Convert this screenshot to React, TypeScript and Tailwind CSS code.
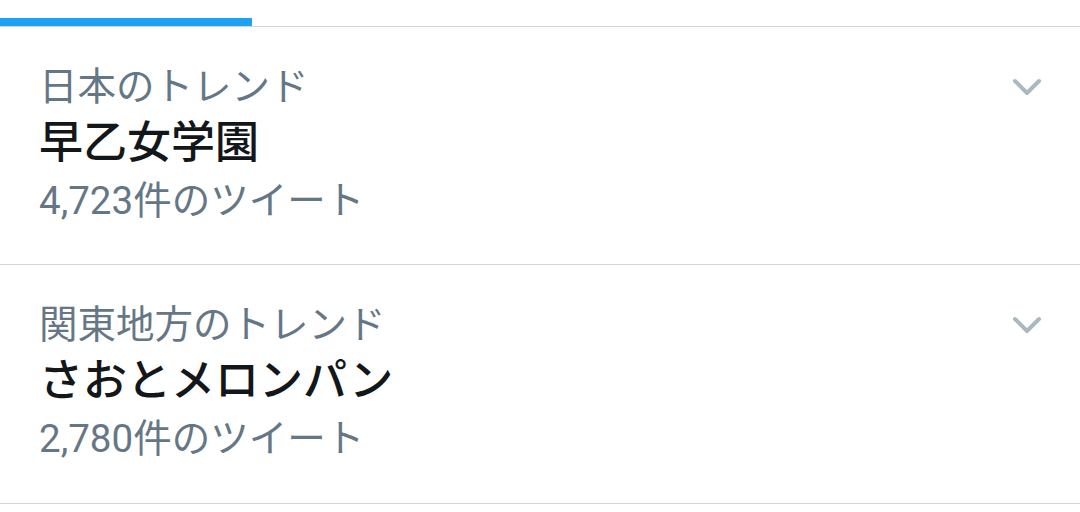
const trends = [
  { place: "日本のトレンド", name: "早乙女学園", count: "4,723件のツイート", pb: "pb-[35px]" },
  { place: "関東地方のトレンド", name: "さおとメロンパン", count: "2,780件のツイート", pb: "pb-[36px]" },
];

function Chevron() {
  return (
    <svg width="32" height="20" viewBox="0 0 32 20" fill="none">
      <path
        d="M4 4 L16 16 L28 4"
        stroke="#aab8c2"
        strokeWidth="4"
        strokeLinecap="round"
        strokeLinejoin="round"
      />
    </svg>
  );
}

export default function App() {
  return (
    <div
      className="h-[512px] w-full overflow-hidden bg-white"
      style={{ fontFamily: 'Roboto, "Noto Sans CJK JP", sans-serif' }}
    >
      {/* タブのインジケーター */}
      <div className="pt-[18px]">
        <div className="h-[8px] w-[252px] bg-[#1da1f2]" />
      </div>
      <div className="h-px w-full bg-[#ccd6dd]" />

      {trends.map(t => (
        <div key={t.name} className="border-b border-[#ccd6dd]">
          <div className={`flex items-start pt-[31px] pr-[37px] pl-[39px] ${t.pb}`}>
            <div className="flex flex-1 flex-col">
              <span className="text-[38.5px] leading-[57px] text-[#657786]">{t.place}</span>
              <span className="text-[44px] leading-[57px] font-medium text-[#14171a]">{t.name}</span>
              <span className="text-[38.5px] leading-[57px] text-[#657786]">{t.count}</span>
            </div>
            <div className="mt-[19px]">
              <Chevron />
            </div>
          </div>
        </div>
      ))}
    </div>
  );
}
